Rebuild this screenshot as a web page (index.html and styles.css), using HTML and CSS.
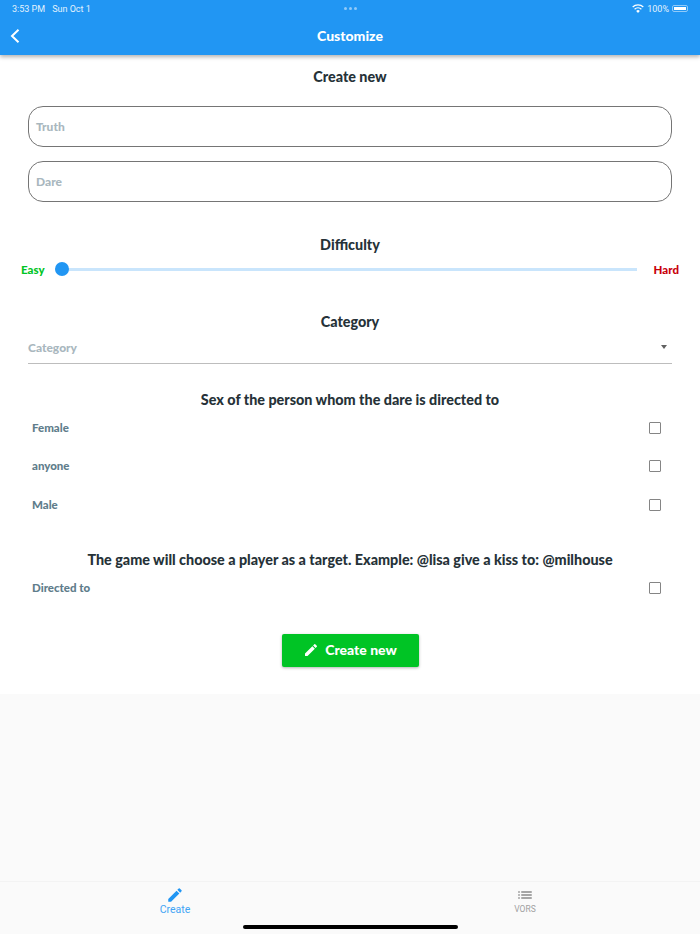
FILE: index.html
```html
<!DOCTYPE html>
<html lang="en">
<head>
    <meta charset="UTF-8">
    <meta name="viewport" content="width=device-width, initial-scale=1.0">
    <title>Customize</title>
    <link rel="stylesheet" href="styles.css">
</head>
<body>
    <header class="app-header">
        <div class="status-bar">
            <div class="status-left">
                <span>3:53 PM</span>
                <span>Sun Oct 1</span>
            </div>
            <div class="status-dots"><i></i><i></i><i></i></div>
            <div class="status-right">
                <svg class="wifi" width="12" height="9" viewBox="0 0 12 9">
                    <path d="M6 9 4.2 6.9a2.6 2.6 0 0 1 3.6 0z" fill="#fff"/>
                    <path d="M2.6 5.2a4.9 4.9 0 0 1 6.8 0M.7 3a7.6 7.6 0 0 1 10.6 0" fill="none" stroke="#fff" stroke-width="1.3"/>
                </svg>
                <span>100%</span>
                <span class="battery"><span class="battery-fill"></span></span>
            </div>
        </div>
        <div class="toolbar">
            <svg class="back" width="10" height="14" viewBox="0 0 10 14">
                <path d="M8.5 .8 2 7l6.5 6.2" fill="none" stroke="#fff" stroke-width="2"/>
            </svg>
            <h1>Customize</h1>
        </div>
    </header>

    <main class="form">
        <h2 class="title title-first">Create new</h2>
        <div class="field">Truth</div>
        <div class="field">Dare</div>

        <h2 class="title title-difficulty">Difficulty</h2>
        <div class="slider-row">
            <span class="easy">Easy</span>
            <div class="slider"><span class="thumb"></span></div>
            <span class="hard">Hard</span>
        </div>

        <h2 class="title title-category">Category</h2>
        <div class="dropdown">
            <span>Category</span>
            <span class="caret"></span>
        </div>

        <h2 class="title title-sex">Sex of the person whom the dare is directed to</h2>
        <div class="check-row"><span>Female</span><span class="box"></span></div>
        <div class="check-row"><span>anyone</span><span class="box"></span></div>
        <div class="check-row"><span>Male</span><span class="box"></span></div>

        <h2 class="title title-target">The game will choose a player as a target. Example: @lisa give a kiss to: @milhouse</h2>
        <div class="check-row"><span>Directed to</span><span class="box"></span></div>

        <button class="create-button">
            <svg width="16" height="16" viewBox="0 0 24 24">
                <path d="M3 17.25V21h3.75L17.81 9.94l-3.75-3.75L3 17.25zM20.71 7.04a1 1 0 0 0 0-1.41l-2.34-2.34a1 1 0 0 0-1.41 0l-1.83 1.83 3.75 3.75 1.83-1.83z" fill="#fff"/>
            </svg>
            Create new
        </button>
    </main>

    <div class="empty"></div>

    <nav class="tabs">
        <div class="tab tab-active">
            <svg width="18" height="18" viewBox="0 0 24 24">
                <path d="M3 17.25V21h3.75L17.81 9.94l-3.75-3.75L3 17.25zM20.71 7.04a1 1 0 0 0 0-1.41l-2.34-2.34a1 1 0 0 0-1.41 0l-1.83 1.83 3.75 3.75 1.83-1.83z" fill="#2196f3"/>
            </svg>
            <span>Create</span>
        </div>
        <div class="tab">
            <svg width="18" height="18" viewBox="0 0 24 24">
                <path d="M3 13h2v-2H3v2zm0 4h2v-2H3v2zm0-8h2V7H3v2zm4 4h14v-2H7v2zm0 4h14v-2H7v2zM7 7v2h14V7H7z" fill="#8a8a8a"/>
            </svg>
            <span>VORS</span>
        </div>
        <span class="home-bar"></span>
    </nav>
</body>
</html>
```

FILE: styles.css
```css
html, body {
    height: 100%;
}

body {
    margin: 0;
    display: flex;
    flex-direction: column;
    height: 934px;
    overflow: hidden;
    background-color: #fafafa;
    color: #263238;
    font-family: Lato, "Open Sans", sans-serif;
}

/* Header */
.app-header {
    height: 55px;
    flex-shrink: 0;
    position: relative;
    z-index: 1;
    background-color: #2196f3;
    color: #fff;
    box-shadow: 0 2px 4px rgba(0, 0, 0, 0.3);
}

.status-bar {
    height: 17px;
    padding: 0 12px;
    display: grid;
    grid-template-columns: 1fr auto 1fr;
    align-items: center;
    font-family: Roboto, sans-serif;
    font-size: 9px;
    color: #e3f2fd;
}

.status-left {
    display: flex;
    gap: 7px;
}

.status-dots {
    display: flex;
    gap: 2px;
}

.status-dots i {
    width: 3px;
    height: 3px;
    border-radius: 50%;
    background-color: #90caf9;
}

.status-right {
    display: flex;
    justify-content: flex-end;
    align-items: center;
    gap: 3px;
}

.battery {
    width: 16px;
    height: 7px;
    padding: 1px;
    box-sizing: border-box;
    border: 1px solid #90caf9;
    border-radius: 2px;
    display: flex;
}

.battery-fill {
    flex: 1;
    background-color: #fff;
}

.toolbar {
    height: 38px;
    display: flex;
    align-items: center;
    justify-content: center;
    position: relative;
}

.toolbar h1 {
    margin: 0 0 1px;
    font-size: 14px;
    font-weight: 900;
}

.back {
    position: absolute;
    left: 10px;
    top: 12px;
}

/* Form */
.form {
    height: 639px;
    flex-shrink: 0;
    box-sizing: border-box;
    padding: 0 28px;
    background-color: #fff;
    display: flex;
    flex-direction: column;
}

.title {
    margin: 0;
    font-size: 14.35px;
    line-height: 18px;
    font-weight: 900;
    text-align: center;
}

.title-first { margin-top: 13px; margin-bottom: 20px; }
.title-difficulty { margin-top: 20px; }
.title-category { margin-top: 32px; margin-bottom: 1px; }
.title-sex { margin-top: 27px; margin-bottom: -1px; }
.title-target { margin-top: 27px; white-space: nowrap; }

.field {
    height: 41px;
    box-sizing: border-box;
    margin-bottom: 14px;
    padding: 0 7px;
    display: flex;
    align-items: center;
    border: 1px solid #757575;
    border-radius: 15px;
    font-size: 12px;
    font-weight: 900;
    color: #a9b7be;
}

.slider-row {
    height: 24px;
    margin: 3px -7px 0;
    display: flex;
    align-items: center;
    font-size: 11.5px;
    font-weight: 900;
}

.easy { color: #00c425; width: 25px; }
.hard { color: #c8000a; width: 26px; text-align: right; }

.slider {
    flex: 1;
    height: 3px;
    margin: 0 16px 0 9px;
    position: relative;
    background-color: #c9e5fc;
}

.thumb {
    position: absolute;
    left: 0;
    top: -5.5px;
    width: 14px;
    height: 14px;
    border-radius: 50%;
    background-color: #2196f3;
}

.dropdown {
    height: 32px;
    box-sizing: border-box;
    padding: 0 5px 0 0;
    display: flex;
    justify-content: space-between;
    align-items: center;
    border-bottom: 1px solid #bdbdbd;
    font-size: 12px;
    font-weight: 900;
    color: #a9b7be;
}

.caret {
    width: 0;
    height: 0;
    margin-top: -2px;
    border-left: 3.5px solid transparent;
    border-right: 3.5px solid transparent;
    border-top: 4px solid #616161;
}

.check-row {
    height: 38.5px;
    padding: 0 11px 0 4px;
    display: flex;
    justify-content: space-between;
    align-items: center;
    font-size: 11.5px;
    font-weight: 900;
    color: #607d8b;
}

.box {
    width: 10px;
    height: 10px;
    margin-top: 1px;
    border: 1.5px solid #858585;
    border-radius: 1px;
}

.create-button {
    align-self: center;
    width: 137px;
    height: 33px;
    margin-top: 27px;
    padding: 0 0 2px;
    display: flex;
    align-items: center;
    justify-content: center;
    gap: 6px;
    border: none;
    border-radius: 2px;
    background-color: #00c425;
    color: #fff;
    font-family: inherit;
    font-size: 14px;
    font-weight: 900;
    box-shadow: 0 1px 3px rgba(0, 0, 0, 0.3);
}

.empty {
    flex: 1;
}

/* Bottom tabs */
.tabs {
    height: 53px;
    flex-shrink: 0;
    position: relative;
    box-sizing: border-box;
    border-top: 1px solid #f3f3f3;
    display: grid;
    grid-template-columns: 1fr 1fr;
    font-family: Roboto, sans-serif;
}

.tab {
    padding-top: 4px;
    display: flex;
    flex-direction: column;
    align-items: center;
    font-size: 8.5px;
    color: #a0a0a0;
}

.tab-active {
    font-size: 10.5px;
    line-height: 11px;
    color: #42a5f5;
}

.home-bar {
    position: absolute;
    left: 243px;
    bottom: 5px;
    width: 215px;
    height: 4px;
    border-radius: 2px;
    background-color: #000;
}
```
